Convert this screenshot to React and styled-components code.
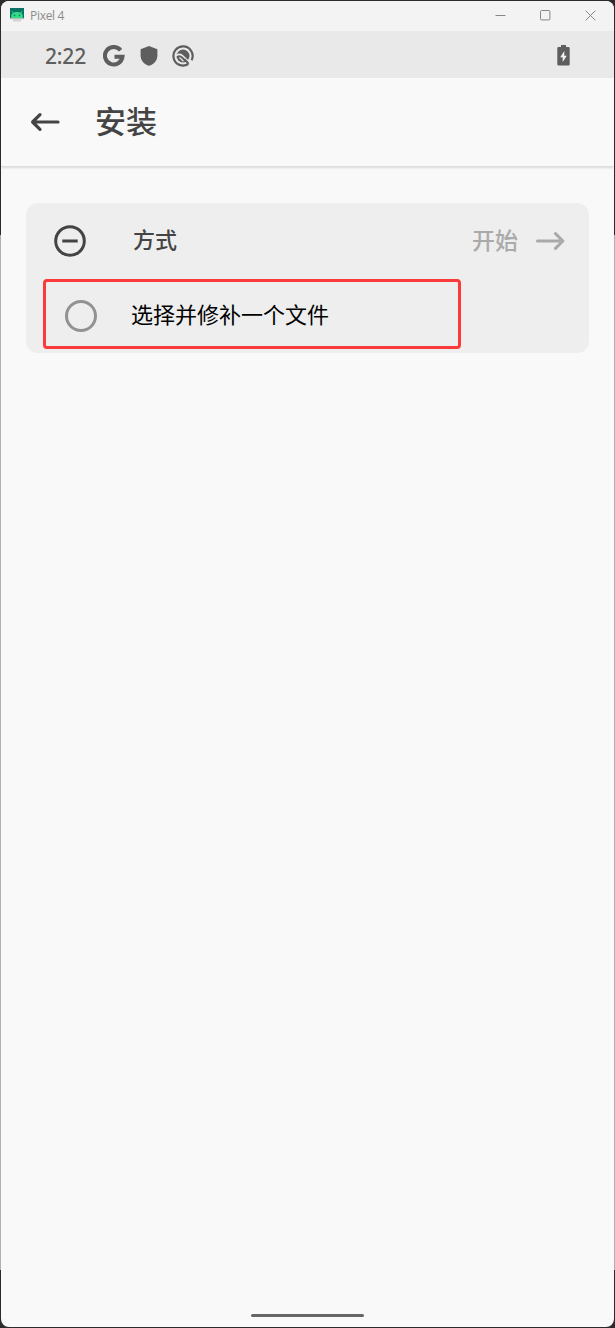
import styled, { createGlobalStyle } from "styled-components";

function App() {
  return (
    <>
      <GlobalStyle />
      <StDesktop>
        <StWindow>
          <StTitleBar>
            <EmulatorIcon />
            <StTitle>Pixel 4</StTitle>
            <StControls>
              <svg width="11" height="11" viewBox="0 0 11 11">
                <path d="M0.5 5.5h10" />
              </svg>
              <svg width="11" height="11" viewBox="0 0 11 11">
                <rect x="0.5" y="0.5" width="9.4" height="9.4" rx="1" />
              </svg>
              <svg width="11" height="11" viewBox="0 0 11 11">
                <path d="M0.6 0.6l9.8 9.8M10.4 0.6l-9.8 9.8" />
              </svg>
            </StControls>
          </StTitleBar>
          <StStatusBar>
            <StClock>2:22</StClock>
            <StNotices>
              <GoogleIcon />
              <ShieldIcon />
              <DebugIcon />
            </StNotices>
            <BatteryIcon />
          </StStatusBar>
          <StAppBar>
            <svg width="30" height="20" viewBox="0 0 30 20">
              <path d="M28 10H3M10 2.6L2.6 10l7.4 7.4" />
            </svg>
            <StHeading>安装</StHeading>
          </StAppBar>
          <StContent>
            <StCard>
              <StCardHeader>
                <svg width="32" height="32" viewBox="0 0 32 32">
                  <circle cx="16" cy="16" r="14.3" />
                  <path d="M8.3 16h15.4" />
                </svg>
                <StMethod>方式</StMethod>
                <StStart>
                  <StStartText>开始</StStartText>
                  <svg width="30" height="20" viewBox="0 0 30 20">
                    <path d="M2.500 10h25M20.500 2.600l7.400 7.400-7.400 7.400" />
                  </svg>
                </StStart>
              </StCardHeader>
              <StOption>
                <StRadio />
                <StOptionText>选择并修补一个文件</StOptionText>
              </StOption>
            </StCard>
          </StContent>
          <StNavBar>
            <StHandle />
          </StNavBar>
        </StWindow>
      </StDesktop>
    </>
  );
}

export default App;

function EmulatorIcon() {
  return (
    <svg width="14" height="14" viewBox="0 0 14 14">
      <path d="M0 0h14v10.5H0z" fill="#0b7264" />
      <path d="M1.2 10V8.5C1.2 5.5 3.5 4 7 4s5.8 1.5 5.8 4.5V10z" fill="#35dc83" />
      <path
        d="M3.4 5.6L2 3.2M10.6 5.6L12 3.2"
        stroke="#35dc83"
        strokeWidth="1"
      />
      <circle cx="4.5" cy="7.4" r="0.8" fill="#0b7264" />
      <circle cx="9.5" cy="7.4" r="0.8" fill="#0b7264" />
      <path d="M0 10.5h14v1H11v2H3v-2H0z" fill="#d3d3d3" />
    </svg>
  );
}

function GoogleIcon() {
  return (
    <svg width="22" height="22" viewBox="0 0 22 22">
      <path
        d="M17.6 5.2A8.8 8.8 0 1 0 19.500 11.800H11.500"
        fill="none"
        stroke="#5e5e5e"
        strokeWidth="4"
      />
    </svg>
  );
}

function ShieldIcon() {
  return (
    <svg width="18" height="20" viewBox="0 0 18 20">
      <path
        d="M9 0l8.4 3.2v6.2c0 5-3.4 8.9-8.4 10.4C4 18.3.6 14.4.6 9.4V3.2z"
        fill="#5e5e5e"
      />
    </svg>
  );
}

function DebugIcon() {
  return (
    <svg width="22" height="22" viewBox="0 0 22 22">
      <path
        d="M16.3 19A9.6 9.6 0 1 1 19.6 15.300"
        fill="none"
        stroke="#5e5e5e"
        strokeWidth="2.2"
      />
      <circle cx="11" cy="11" r="6.5" fill="#5e5e5e" />
      <path
        d="M4 10.5c3-2 5-1.5 7.2.7l5.5 5.5"
        fill="none"
        stroke="#e9e9e9"
        strokeWidth="1.6"
      />
      <path d="M7.5 12.5l4 3.7" stroke="#e9e9e9" strokeWidth="1.2" />
      <path d="M12.3 14.3l4.3 4.5" stroke="#5e5e5e" strokeWidth="2" />
    </svg>
  );
}

function BatteryIcon() {
  return (
    <svg width="13" height="21" viewBox="0 0 13 21">
      <path
        d="M4 0h5v2h2.5a1.2 1.2 0 0 1 1.2 1.2v16a1.2 1.2 0 0 1-1.2 1.2h-10A1.2 1.2 0 0 1 .3 19.2v-16A1.2 1.2 0 0 1 1.5 2H4z"
        fill="#5e5e5e"
      />
      <path d="M7.3 6L3.2 12.2h2.5V17l4.100-6.300H7.300z" fill="#f1f1f1" />
    </svg>
  );
}

const GlobalStyle = createGlobalStyle`
  body {
    margin: 0;
    font-family: "Noto Sans CJK SC", sans-serif;
  }

  svg {
    display: block;
    flex-shrink: 0;
  }
`;

/*창 뒤의 바탕*/
const StDesktop = styled.div`
  box-sizing: border-box;
  height: 1328px;
  padding: 1px;
  background: linear-gradient(
    #2b2a2d 0 235px,
    #b0b0b0 235px 1270px,
    #2b2a2d 1270px
  );
`;

const StWindow = styled.div`
  display: flex;
  flex-direction: column;
  height: 1326px;
  border-radius: 8px;
  overflow: hidden;
  background: #f9f9f9;
`;

/*윈도우 타이틀바*/
const StTitleBar = styled.div`
  display: flex;
  align-items: center;
  box-sizing: border-box;
  height: 30px;
  padding: 0 18px 2px 9px;
  background: #f3f3f3;
`;

const StTitle = styled.span`
  margin-left: 6px;
  padding-top: 1px;
  font-family: "Open Sans", sans-serif;
  font-size: 12px;
  letter-spacing: -0.3px;
  color: #8b8b8b;
`;

const StControls = styled.div`
  display: flex;
  gap: 34px;
  margin-left: auto;

  svg {
    fill: none;
    stroke: #868686;
    stroke-width: 1;
  }
`;

/*안드로이드 상태바*/
const StStatusBar = styled.div`
  display: flex;
  align-items: center;
  height: 47px;
  padding: 2px 44px 0 44px;
  box-sizing: border-box;
  background: #e9e9e9;

  > svg {
    margin-left: auto;
  }
`;

const StClock = styled.span`
  width: 58px;
  padding-top: 1px;
  font-family: "Noto Sans", sans-serif;
  font-size: 21px;
  font-weight: 500;
  line-height: 24px;
  letter-spacing: -0.2px;
  color: #5e5e5e;
`;

const StNotices = styled.div`
  display: flex;
  align-items: center;
  gap: 14.5px;
`;

const StAppBar = styled.header`
  display: flex;
  align-items: center;
  gap: 35px;
  height: 88px;
  padding-left: 29px;
  flex-shrink: 0;
  box-shadow: 0 2px 2px rgba(0, 0, 0, 0.12);

  svg {
    fill: none;
    stroke: #444444;
    stroke-width: 3.2;
    stroke-linecap: round;
    stroke-linejoin: round;
  }
`;

const StHeading = styled.h1`
  margin: 0;
  padding-bottom: 5px;
  font-size: 31px;
  font-weight: 500;
  line-height: 40px;
  color: #444444;
`;

const StContent = styled.main`
  flex: 1;
  padding: 37px 25px 0;
`;

const StCard = styled.section`
  height: 150px;
  border-radius: 12px;
  background: #eeeeee;
`;

const StCardHeader = styled.div`
  display: flex;
  align-items: center;
  height: 76px;
  padding: 0 24px 1px 28px;
  box-sizing: border-box;

  svg {
    fill: none;
    stroke: #444444;
    stroke-width: 3;
  }
`;

const StMethod = styled.span`
  margin-left: 47px;
  padding-bottom: 5px;
  font-size: 22px;
  font-weight: 500;
  color: #444444;
`;

const StStart = styled.div`
  display: flex;
  align-items: center;
  gap: 17px;
  margin-left: auto;

  svg {
    stroke: #aaaaaa;
    stroke-linecap: round;
    stroke-linejoin: round;
  }
`;

const StStartText = styled.span`
  padding-bottom: 4px;
  font-size: 23px;
  font-weight: 500;
  color: #aaaaaa;
`;

/*빨간 강조 테두리가 있는 선택 항목*/
const StOption = styled.div`
  display: flex;
  align-items: center;
  gap: 34px;
  box-sizing: border-box;
  width: 418px;
  height: 70px;
  margin-left: 17px;
  padding: 3px 0 0 19px;
  border: 3px solid #fb3b3b;
  border-radius: 4px;
`;

const StOptionText = styled.span`
  padding-bottom: 5px;
  font-size: 22px;
  color: #000000;
`;

const StRadio = styled.span`
  box-sizing: border-box;
  width: 32px;
  height: 32px;
  border: 3px solid #929292;
  border-radius: 50%;
`;

const StNavBar = styled.div`
  display: flex;
  justify-content: center;
  height: 13px;
`;

const StHandle = styled.div`
  width: 113px;
  height: 3px;
  border-radius: 2px;
  background: #666666;
`;
